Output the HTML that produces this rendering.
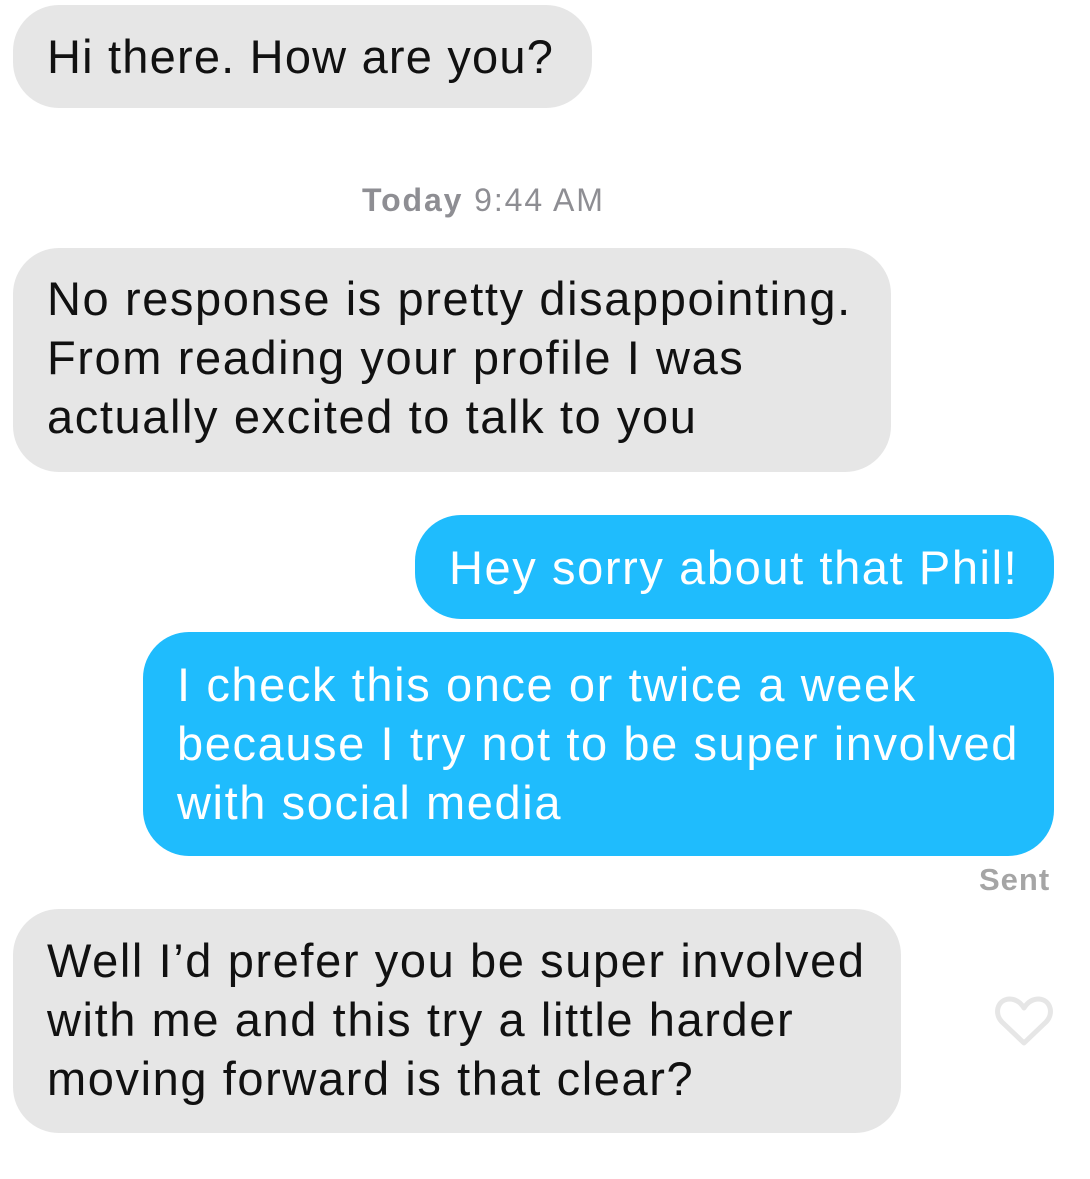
<!DOCTYPE html>
<html><head><style>
body{margin:0;width:1090px;height:1179px;background:#fff;position:relative;overflow:hidden;font-family:"Liberation Sans",sans-serif;}
.b{position:absolute;border-radius:46px;font-size:47px;letter-spacing:1.6px;line-height:59px;box-sizing:border-box;padding:0 0 0 34px;color:#111;white-space:nowrap;}
.g{background:#e6e6e6;}
.u{background:#1fbcfd;color:#fff;}
.t{position:absolute;color:#8e8e93;font-size:32px;letter-spacing:1.9px;}
</style></head><body>
<div class="b g" style="left:13px;top:5px;width:579px;height:103px;padding-top:22px;letter-spacing:1.2px">Hi there. How are you?</div>
<div class="t" style="left:362px;top:182px"><b>Today</b> 9:44 AM</div>
<div class="b g" style="left:13px;top:248px;width:878px;height:224px;padding-top:21px">No response is pretty disappointing.<br>From reading your profile I was<br>actually excited to talk to you</div>
<div class="b u" style="left:415px;top:515px;width:639px;height:104px;padding-top:23px">Hey sorry about that Phil!</div>
<div class="b u" style="left:143px;top:632px;width:911px;height:224px;padding-top:23px">I check this once or twice a week<br>because I try not to be super involved<br>with social media</div>
<div class="t" style="left:979px;top:862px;font-weight:bold;color:#a5a5a5;font-size:31px;letter-spacing:1px">Sent</div>
<div class="b g" style="left:13px;top:909px;width:888px;height:224px;padding-top:22px">Well I’d prefer you be super involved<br>with me and this try a little harder<br>moving forward is that clear?</div>
<svg style="position:absolute;left:994px;top:994px" width="60" height="54" viewBox="0 0 60 54"><path d="M30 49 L8 28 C0 20 3 6 15 5 C22 5 27 9 30 14 C33 9 38 5 45 5 C57 6 60 20 52 28 Z" fill="none" stroke="#e6e6e6" stroke-width="5" stroke-linejoin="round"/></svg>
</body></html>
